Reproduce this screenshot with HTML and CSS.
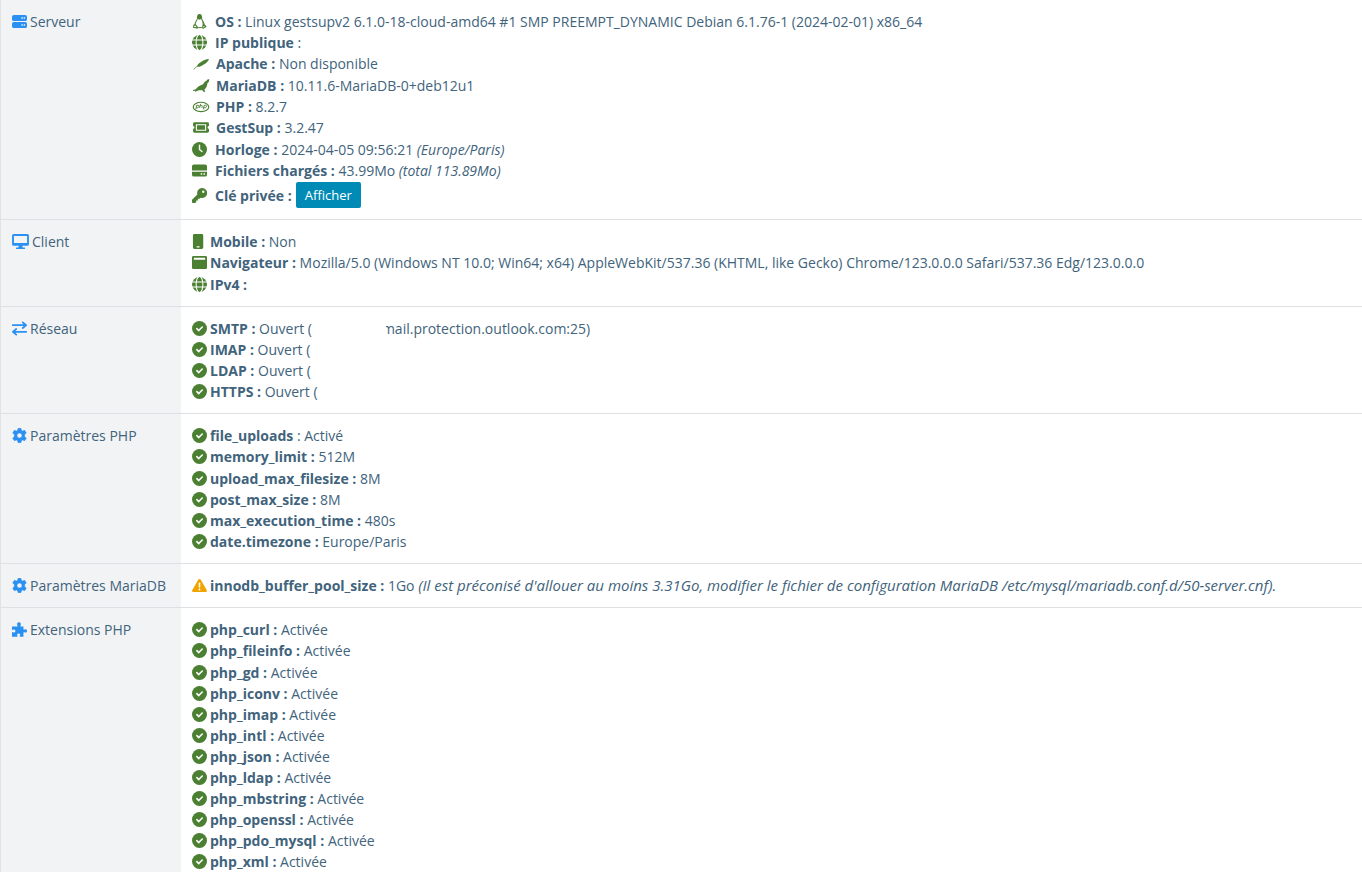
FILE: index.html
```
<!DOCTYPE html>
<html lang="fr">
<head>
<meta charset="utf-8">
<title>GestSup - Système</title>
<link rel="stylesheet" href="styles.css">
</head>

<body>
	<svg class="sprite" aria-hidden="true">
		<symbol id="i-check" viewBox="0 0 16 16"><circle cx="8" cy="8" r="8"/><path d="M5.200 8.200l2 2 3.700-3.800" fill="none" stroke="#fff" stroke-width="1.700" stroke-linecap="round" stroke-linejoin="round"/></symbol>
		<symbol id="i-globe" viewBox="0 0 16 16"><circle cx="8" cy="8" r="8"/><g fill="none" stroke="#fff" stroke-width="1.1"><ellipse cx="8" cy="8" rx="3.6" ry="8.6"/><path d="M0 5.3h16M0 10.7h16"/></g></symbol>
		<symbol id="i-server" viewBox="0 0 16 16"><path fill-rule="evenodd" d="M2 1h12a2 2 0 0 1 2 2v2.500a2 2 0 0 1-2 2H2a2 2 0 0 1-2-2V3a2 2 0 0 1 2-2zM10 3.500v1.500h1.500V3.500zM12.500 3.500v1.500H14V3.500zM2 8.500h12a2 2 0 0 1 2 2V13a2 2 0 0 1-2 2H2a2 2 0 0 1-2-2v-2.500a2 2 0 0 1 2-2zM10 11v1.500h1.500V11zM12.500 11v1.500H14V11z"/></symbol>
		<symbol id="i-desktop" viewBox="0 0 18 16"><path fill-rule="evenodd" d="M1.700 0h14.600A1.700 1.700 0 0 1 18 1.700v9.100a1.700 1.700 0 0 1-1.700 1.700h-5.500l.5 1.900h1.900a.8.8 0 0 1 0 1.600H4.800a.8.8 0 0 1 0-1.600h1.900l.5-1.900H1.700A1.700 1.700 0 0 1 0 10.800V1.700A1.700 1.700 0 0 1 1.700 0zM2 2v7.500h14V2z"/></symbol>
		<symbol id="i-exchange" viewBox="0 0 16 16"><path d="M.8 4.500h13.700M11.500 1.500l3.500 3-3.500 3M15.200 11.500H1.500M4.500 8.500l-3.500 3 3.500 3" fill="none" stroke="currentColor" stroke-width="1.900" stroke-linecap="round"/></symbol>
		<symbol id="i-cog" viewBox="0 0 16 16"><path fill-rule="evenodd" stroke="currentColor" stroke-width=".6" stroke-linejoin="round" d="M6.500.3h3l.5 2.200 1.300.8 2.200-.8 1.700 2.700-1.700 1.700v2.200l1.700 1.700-1.700 2.700-2.200-.8-1.300.8-.5 2.200h-3L6 13.500l-1.300-.8-2.200.8-1.700-2.700 1.700-1.700V6.900L.8 5.200l1.700-2.700 2.200.8L6 2.500zM8 5.300a2.700 2.700 0 1 0 0 5.400 2.700 2.700 0 0 0 0-5.400z"/></symbol>
		<symbol id="i-puzzle" viewBox="0 0 16 16"><path d="M5.300 4.800c.7 0 .9-.6.500-1.200C4.800 2.100 5.700.3 7.400.3s2.700 1.800 1.700 3.300c-.4.600-.2 1.200.5 1.200h2.600v2.600c0 .8.5 1 1.200.6 1.200-.8 2.600-.1 2.600 1.500s-1.400 2.300-2.600 1.500c-.7-.4-1.200-.2-1.200.6v4.100H8.900c-.6 0-.8-.5-.5-1.100.8-1.200.1-2.300-1.300-2.300s-2.100 1.100-1.300 2.300c.3.600.1 1.100-.5 1.100H0v-4.400c0-.6.4-.8 1-.4 1.300.8 2.600.1 2.600-1.300S2.300 7.500 1 8.300c-.6.400-1 .2-1-.4V4.800z"/></symbol>
		<symbol id="i-warning" viewBox="0 0 16 16"><path d="M8 1c.5 0 .9.2 1.200.7l6.600 11.300c.5.900-.1 2-1.200 2H1.400c-1.100 0-1.700-1.100-1.200-2L6.800 1.700C7.100 1.200 7.500 1 8 1z"/><path d="M8 5.500v4" stroke="#fff" stroke-width="1.600" stroke-linecap="round"/><circle cx="8" cy="12.200" r="1" fill="#fff"/></symbol>
		<symbol id="i-tux" viewBox="0 0 16 16"><path d="M5.800 5.200C5.600 2.300 6.300.6 8 .6s2.400 1.700 2.300 4.300c.2 2 2.600 3.900 2.900 7.300M5.800 5.200C4.800 7.500 3 9.500 3 12" fill="none" stroke="currentColor" stroke-width="1.100"/><path d="M5.700 3C6 1.300 6.800.4 8 .4S10.200 1.500 10.300 3.200L10.200 5 8 6 6 5zM10.500 6.500l2.900 5-1.600.7zM1.700 11.300l2.300-.5 2.600 3.400-.9 1.500-4.800-1zM11.200 11.300l3.100.3 1.200 2-3.200 2.200-1.600-.6z"/><path d="M2.500 12.700l1-.4 1.500 1.900-2.900-.4zM12.300 12.700l1.500.7-1.800 1.200z" fill="#fff"/><path d="M6 14.500h5" stroke="currentColor"/></symbol>
		<symbol id="i-feather" viewBox="0 0 17 16"><path d="M.2 14.300c1.300-1.500 2.700-2.600 3.900-3.500C6.300 6.600 11.500 3.800 17 3.100c-.7 3-4.600 5.700-8.200 7.500-1.500.7-3.100.8-4.300.9-1.300.8-2.400 1.700-3.400 2.900z"/></symbol>
		<symbol id="i-seal" viewBox="0 0 18 16"><path d="M17.900 1.500c-1.300-.2-2.200.4-3.100 1.300-1.500.4-2.100 1.400-2.900 2.900-1.300 2.200-3.700 2-5.700 3.300-1.300.9-1.800 2.500-3.300 3.200L.3 12.900l.5.900 2.300-.1-.6 1.300 3.300-1.700c1.600-.5 2.900-.2 4.300-.6l1.700 2 1.700.2-.9-2.600c1.300-1.400 2.200-2.300 2.700-4.100.4-1.900.6-3.300 2-3.900z"/></symbol>
		<symbol id="i-php" viewBox="0 0 18 16"><ellipse cx="9" cy="8.500" rx="8.300" ry="5" fill="none" stroke="currentColor" stroke-width="1.200"/><path d="M3.400 11l1-4.300h1.500c1.700 0 1.200 2.700-.8 2.700H4M8.500 5.300L7.500 9.500M8.200 6.900h1.500c.8 0 .7.600.6 1l-.4 1.600M11.400 11l1-4.300h1.500c1.700 0 1.200 2.700-.8 2.700H12" fill="none" stroke="currentColor"/></symbol>
		<symbol id="i-ticket" viewBox="0 0 17 16"><path fill-rule="evenodd" d="M1.500 2.500h14A1.500 1.500 0 0 1 17 4v2.500a1.500 1.500 0 0 0 0 3V12a1.500 1.500 0 0 1-1.500 1.500h-14A1.500 1.500 0 0 1 0 12V9.500a1.500 1.500 0 0 0 0-3V4a1.500 1.500 0 0 1 1.500-1.500zM3 4.500v7h11v-7zM4.200 5.700h8.600v4.600H4.200z"/></symbol>
		<symbol id="i-clock" viewBox="0 0 16 16"><circle cx="8" cy="8" r="8"/><path d="M8 3.500V8l2.600 2.200" fill="none" stroke="#fff" stroke-width="1.500" stroke-linecap="round"/></symbol>
		<symbol id="i-hdd" viewBox="0 0 16 16"><path fill-rule="evenodd" d="M2 1.500h12a2 2 0 0 1 2 2V8H0V3.500a2 2 0 0 1 2-2zM0 9.200h16v3.300a2 2 0 0 1-2 2H2a2 2 0 0 1-2-2zM9.300 11v1.600h1.600V11zM12.300 11v1.600h1.600V11z"/></symbol>
		<symbol id="i-key" viewBox="0 0 16 16"><path fill-rule="evenodd" d="M10.700 0a5.300 5.300 0 1 1-1.600 10.300L8 11.500H6.300v1.800H4.500V15l-1 1H.7L0 15.300v-2.800l5.700-5.700A5.300 5.300 0 0 1 10.700 0zM12 2.700a1.300 1.300 0 1 0 0 2.600 1.300 1.300 0 0 0 0-2.600z"/></symbol>
		<symbol id="i-mobile" viewBox="0 0 16 16"><path fill-rule="evenodd" d="M2.500 0h8A1.500 1.500 0 0 1 12 1.500v13a1.500 1.500 0 0 1-1.500 1.500h-8A1.500 1.500 0 0 1 1 14.500v-13A1.500 1.500 0 0 1 2.500 0zM5 13v1.300h3V13z"/></symbol>
		<symbol id="i-window" viewBox="0 0 16 16"><path fill-rule="evenodd" d="M1.500 1h13A1.500 1.500 0 0 1 16 2.500v11a1.500 1.500 0 0 1-1.500 1.500h-13A1.500 1.500 0 0 1 0 13.500v-11A1.500 1.500 0 0 1 1.500 1zM2 3v2h12V3z"/></symbol>
	</svg>

	<table class="system">
		<tr>
			<th scope="row"><svg class="icon"><use href="#i-server"/></svg>Serveur</th>
			<td>
				<ul class="infos server">
					<li><svg class="icon"><use href="#i-tux"/></svg><b>OS :</b> Linux gestsupv2 6.1.0-18-cloud-amd64 #1 SMP PREEMPT_DYNAMIC Debian 6.1.76-1 (2024-02-01) x86_64</li>
					<li><svg class="icon"><use href="#i-globe"/></svg><b>IP publique</b> :</li>
					<li class="tall"><svg class="icon wide"><use href="#i-feather"/></svg><b>Apache :</b> Non disponible</li>
					<li><svg class="icon wide"><use href="#i-seal"/></svg><b>MariaDB :</b> 10.11.6-MariaDB-0+deb12u1</li>
					<li><svg class="icon wide"><use href="#i-php"/></svg><b>PHP :</b> 8.2.7</li>
					<li class="tall"><svg class="icon wide"><use href="#i-ticket"/></svg><b>GestSup :</b> 3.2.47</li>
					<li><svg class="icon"><use href="#i-clock"/></svg><b>Horloge :</b> 2024-04-05 09:56:21 <i class="small">(Europe/Paris)</i></li>
					<li><svg class="icon"><use href="#i-hdd"/></svg><b>Fichiers chargés :</b> 43.99Mo <i class="small">(total 113.89Mo)</i></li>
					<li class="key"><svg class="icon"><use href="#i-key"/></svg><b>Clé privée :</b> <button type="button" class="btn">Afficher</button></li>
				</ul>
			</td>
		</tr>
		<tr>
			<th scope="row"><svg class="icon wide"><use href="#i-desktop"/></svg>Client</th>
			<td>
				<ul class="infos">
					<li><svg class="icon"><use href="#i-mobile"/></svg><b>Mobile :</b> Non</li>
					<li class="tall"><svg class="icon"><use href="#i-window"/></svg><b>Navigateur :</b> Mozilla/5.0 (Windows NT 10.0; Win64; x64) AppleWebKit/537.36 (KHTML, like Gecko) Chrome/123.0.0.0 Safari/537.36 Edg/123.0.0.0</li>
					<li><svg class="icon"><use href="#i-globe"/></svg><b>IPv4 :</b></li>
				</ul>
			</td>
		</tr>
		<tr>
			<th scope="row"><svg class="icon"><use href="#i-exchange"/></svg>Réseau</th>
			<td>
				<ul class="infos">
					<li><svg class="icon"><use href="#i-check"/></svg><b>SMTP :</b> Ouvert (<span class="host">mail.protection.outlook.com:25)</span></li>
					<li><svg class="icon"><use href="#i-check"/></svg><b>IMAP :</b> Ouvert (</li>
					<li><svg class="icon"><use href="#i-check"/></svg><b>LDAP :</b> Ouvert (</li>
					<li><svg class="icon"><use href="#i-check"/></svg><b>HTTPS :</b> Ouvert (</li>
				</ul>
			</td>
		</tr>
		<tr>
			<th scope="row"><svg class="icon"><use href="#i-cog"/></svg>Paramètres PHP</th>
			<td>
				<ul class="infos">
					<li><svg class="icon"><use href="#i-check"/></svg><b>file_uploads</b> : Activé</li>
					<li class="tall"><svg class="icon"><use href="#i-check"/></svg><b>memory_limit :</b> 512M</li>
					<li><svg class="icon"><use href="#i-check"/></svg><b>upload_max_filesize :</b> 8M</li>
					<li><svg class="icon"><use href="#i-check"/></svg><b>post_max_size :</b> 8M</li>
					<li><svg class="icon"><use href="#i-check"/></svg><b>max_execution_time :</b> 480s</li>
					<li><svg class="icon"><use href="#i-check"/></svg><b>date.timezone :</b> Europe/Paris</li>
				</ul>
			</td>
		</tr>
		<tr>
			<th scope="row"><svg class="icon"><use href="#i-cog"/></svg>Paramètres MariaDB</th>
			<td>
				<ul class="infos">
					<li><svg class="icon warning"><use href="#i-warning"/></svg><b>innodb_buffer_pool_size :</b> 1Go <i>(Il est préconisé d'allouer au moins 3.31Go, modifier le fichier de configuration MariaDB /etc/mysql/mariadb.conf.d/50-server.cnf).</i></li>
				</ul>
			</td>
		</tr>
		<tr>
			<th scope="row"><svg class="icon"><use href="#i-puzzle"/></svg>Extensions PHP</th>
			<td>
				<ul class="infos">
					<li><svg class="icon"><use href="#i-check"/></svg><b>php_curl :</b> Activée</li>
					<li class="tall"><svg class="icon"><use href="#i-check"/></svg><b>php_fileinfo :</b> Activée</li>
					<li><svg class="icon"><use href="#i-check"/></svg><b>php_gd :</b> Activée</li>
					<li><svg class="icon"><use href="#i-check"/></svg><b>php_iconv :</b> Activée</li>
					<li><svg class="icon"><use href="#i-check"/></svg><b>php_imap :</b> Activée</li>
					<li><svg class="icon"><use href="#i-check"/></svg><b>php_intl :</b> Activée</li>
					<li><svg class="icon"><use href="#i-check"/></svg><b>php_json :</b> Activée</li>
					<li><svg class="icon"><use href="#i-check"/></svg><b>php_ldap :</b> Activée</li>
					<li><svg class="icon"><use href="#i-check"/></svg><b>php_mbstring :</b> Activée</li>
					<li><svg class="icon"><use href="#i-check"/></svg><b>php_openssl :</b> Activée</li>
					<li><svg class="icon"><use href="#i-check"/></svg><b>php_pdo_mysql :</b> Activée</li>
					<li><svg class="icon"><use href="#i-check"/></svg><b>php_xml :</b> Activée</li>
				</ul>
			</td>
		</tr>
	</table>
</body>
</html>
```
FILE: styles.css
```
body {
	margin: 0;
	background: #fff;
	color: #41637c;
	font-family: "Open Sans", sans-serif;
	font-size: 14px;
	line-height: 21px;
	overflow: hidden;
}

.sprite {
	display: none;
}

.system {
	width: 100%;
	border-collapse: separate;
	border-spacing: 0;
	border-left: 1px solid #e0e2e4;
}

.system th,
.system td {
	padding: 11px;
	border-bottom: 1px solid #dee1e4;
	vertical-align: top;
	text-align: left;
}

.system th {
	width: 158px;
	background: #f2f3f5;
	font-weight: normal;
	white-space: nowrap;
}

.infos {
	margin: 0;
	padding: 0;
	list-style: none;
}

.infos .tall {
	height: 22px;
}

.infos b {
	font-weight: 700;
}

.infos i {
	font-size: 15px;
	line-height: 1;
}

.infos .small {
	font-size: 14px;
}

.icon {
	display: inline-block;
	width: 15px;
	height: 15px;
	margin-right: 3px;
	vertical-align: -2px;
	fill: currentColor;
	color: #4b8032;
}

.icon.wide {
	width: 17px;
}

.system th .icon {
	color: #2a91f2;
}

.system .icon.warning {
	color: #f0a400;
}

.server .icon {
	margin-right: 8px;
}

.server .icon.wide {
	width: 18px;
	margin-right: 6px;
}

/* the start of the host name stays hidden */
.host {
	margin-left: 70px;
	clip-path: inset(0 0 0 4px);
	display: inline-block;
}

.key {
	display: flex;
	align-items: center;
	padding-top: 1px;
}

.btn {
	margin-left: 4px;
	padding: 3px 9px;
	border: 0;
	border-radius: 2px;
	background: #008bb6;
	color: #fff;
	font-family: inherit;
	font-size: 13px;
	line-height: 20px;
	cursor: pointer;
}

.btn:hover {
	background: #007ba2;
}
```
